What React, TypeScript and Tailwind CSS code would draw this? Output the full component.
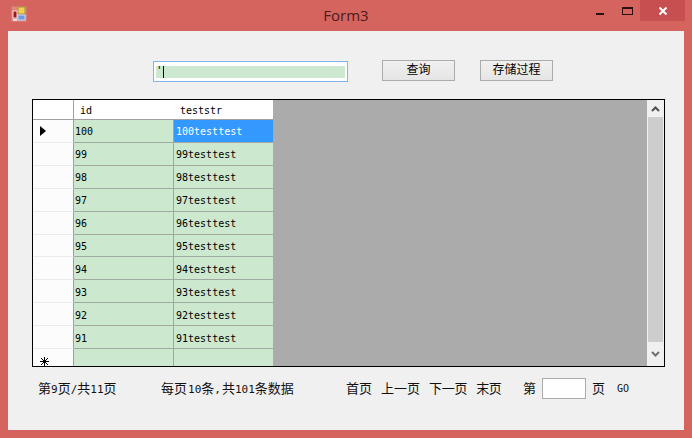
const rows = [100, 99, 98, 97, 96, 95, 94, 93, 92, 91];

const cjk = { fontFamily: '"DejaVu Sans Mono", "Noto Sans CJK SC", monospace' };

const FormIcon = () => (
  <svg width="16" height="16" viewBox="0 0 16 16">
    <rect x="0.5" y="0.5" width="15" height="15" fill="#e8a09a" opacity="0.6" />
    <rect x="7" y="1" width="7" height="7" fill="#f0d050" stroke="#a89040" />
    <rect x="2" y="5" width="4" height="7" fill="#a01818" stroke="#f4dcd8" />
    <rect x="7" y="9" width="7" height="5" fill="#6c9ae0" stroke="#c8d8f0" />
    <rect x="2" y="13" width="4" height="2" fill="#f4dcd8" />
  </svg>
);

const Caption = () => (
  <div className="relative flex h-[31px] shrink-0 items-center">
    <div className="ml-[11px] mt-[-3px]">
      <FormIcon />
    </div>
    <div
      className="absolute left-0 right-0 top-[6px] text-center text-[15px] leading-[18px] text-[#4a1c1a]"
      style={{ fontFamily: '"Open Sans", sans-serif' }}
    >
      Form3
    </div>
    <div className="ml-auto mr-[7px] flex h-[21px] self-start">
      <div className="flex w-[29px] justify-center pt-[13px]">
        <div className="h-[2px] w-[8px] bg-[#2a1010]" />
      </div>
      <div className="flex w-[26px] justify-center pt-[7px]">
        <div className="h-[8px] w-[11px] border border-t-2 border-[#2a1010]" />
      </div>
      <div className="flex w-[45px] items-center justify-center bg-[#c74f4f]">
        <svg width="10" height="10" viewBox="0 0 10 10">
          <path d="M1.5 1.5 L8.5 8.5 M8.5 1.5 L1.5 8.5" stroke="#fff" strokeWidth="2" />
        </svg>
      </div>
    </div>
  </div>
);

const Button = ({ label }: { label: string }) => (
  <button className="flex h-[21px] w-[73px] items-center justify-center border border-[#acacac] bg-gradient-to-b from-[#f0f0f0] to-[#e5e5e5] pb-[2px] text-[12px] leading-none text-black">
    {label}
  </button>
);

const Row = ({ id, selected }: { id: number; selected: boolean }) => (
  <div className="flex h-[23px]">
    <div className="flex w-[41px] items-center border-b border-r border-b-[#ececec] border-r-[#a0a0a0] bg-[#fcfcfc] pl-[7px]">
      {selected && (
        <svg width="6" height="10" viewBox="0 0 6 10">
          <path d="M0 0 L6 5 L0 10 Z" fill="#000" />
        </svg>
      )}
    </div>
    <div className="flex w-[100px] items-center border-b border-r border-[#a0a8a0] bg-[#cce8cf] pl-[1px] pt-[2px]">{id}</div>
    <div
      className={
        selected
          ? "flex w-[99px] items-center border-b border-[#a0a8a0] bg-[#3399ff] pl-[2px] pt-[2px] text-white"
          : "flex w-[99px] items-center border-b border-[#a0a8a0] bg-[#cce8cf] pl-[2px] pt-[2px]"
      }
    >
      {id}testtest
    </div>
  </div>
);

const Grid = () => (
  <div className="flex h-[268px] w-[633px] border border-black bg-[#ababab] text-[10px] text-black">
    <div className="flex w-[240px] flex-col overflow-hidden">
      <div className="flex h-[20px] shrink-0 border-b border-[#a0a0a0] bg-white">
        <div className="w-[41px] border-r border-[#a0a0a0]" />
        <div className="flex w-[100px] items-center pl-[6px] pt-[2px]">id</div>
        <div className="flex w-[99px] items-center pl-[6px] pt-[2px]">teststr</div>
      </div>
      {rows.map((id, index) => (
        <Row key={id} id={id} selected={index === 0} />
      ))}
      <div className="flex flex-1">
        <div className="w-[41px] overflow-hidden border-r border-[#a0a0a0] bg-[#fcfcfc] pl-[7px] pt-[8px]">
          <svg width="9" height="9" viewBox="0 0 9 9">
            <path d="M4.5 0 V9 M0 4.5 H9 M1 1 L8 8 M8 1 L1 8" stroke="#000" strokeWidth="1" fill="none" />
          </svg>
        </div>
        <div className="w-[100px] border-r border-[#a0a8a0] bg-[#cce8cf]" />
        <div className="w-[99px] bg-[#cce8cf]" />
      </div>
    </div>
    <div className="flex-1" />
    <div className="flex w-[17px] flex-col bg-[#f0f0f0]">
      <div className="flex h-[17px] items-center justify-center">
        <svg width="9" height="6" viewBox="0 0 9 6">
          <path d="M1 5 L4.5 1.5 L8 5" fill="none" stroke="#505050" strokeWidth="2" />
        </svg>
      </div>
      <div className="mx-[1px] flex-1 bg-[#cdcdcd]" />
      <div className="flex h-[24px] items-center justify-center">
        <svg width="9" height="6" viewBox="0 0 9 6">
          <path d="M1 1 L4.5 4.5 L8 1" fill="none" stroke="#707070" strokeWidth="2" />
        </svg>
      </div>
    </div>
  </div>
);

const Num = ({ children }: { children: string }) => <span className="text-[11px]">{children}</span>;

const Pager = () => (
  <div className="ml-[6px] mt-[11px] flex h-[21px] items-center text-[13px] text-[#111]">
    <span className="w-[123px]">
      第<Num>9</Num>页<Num>/</Num>共<Num>11</Num>页
    </span>
    <span className="w-[185px]">
      每页<span className="ml-[1px]"><Num>10</Num></span>条<span className="mr-[1px]"><Num>,</Num></span>共<Num>101</Num>条数据
    </span>
    <div className="flex w-[177px] gap-[9px]">
      <span>首页</span>
      <span>上一页</span>
      <span className="tracking-[-0.3px]">下一页</span>
      <span className="tracking-[-0.5px]">末页</span>
    </div>
    <span className="w-[19px]">第</span>
    <div className="h-[21px] w-[44px] border border-[#acacac] bg-white" />
    <span className="ml-[6px]">页</span>
    <span className="ml-[12px] text-[10px]">GO</span>
  </div>
);

export default function App() {
  return (
    <div className="flex h-[438px] w-[692px] flex-col bg-[#d6645e]" style={cjk}>
      <Caption />
      <div className="mx-[8px] mb-[8px] flex-1 bg-[#f0f0f0] pl-[24px]">
        <div className="ml-[121px] mt-[29px] flex items-start">
          <div className="mt-[1px] flex h-[21px] w-[195px] items-center border border-[#7eb4ea] bg-white px-[2px]">
            <div className="flex h-[12px] flex-1 items-center bg-[#cce8cf] text-[11px]">
              <span>'</span>
              <span className="h-[12px] w-px bg-black" />
            </div>
          </div>
          <div className="ml-[34px]">
            <Button label="查询" />
          </div>
          <div className="ml-[25px]">
            <Button label="存储过程" />
          </div>
        </div>
        <div className="mt-[17px]">
          <Grid />
        </div>
        <Pager />
      </div>
    </div>
  );
}
